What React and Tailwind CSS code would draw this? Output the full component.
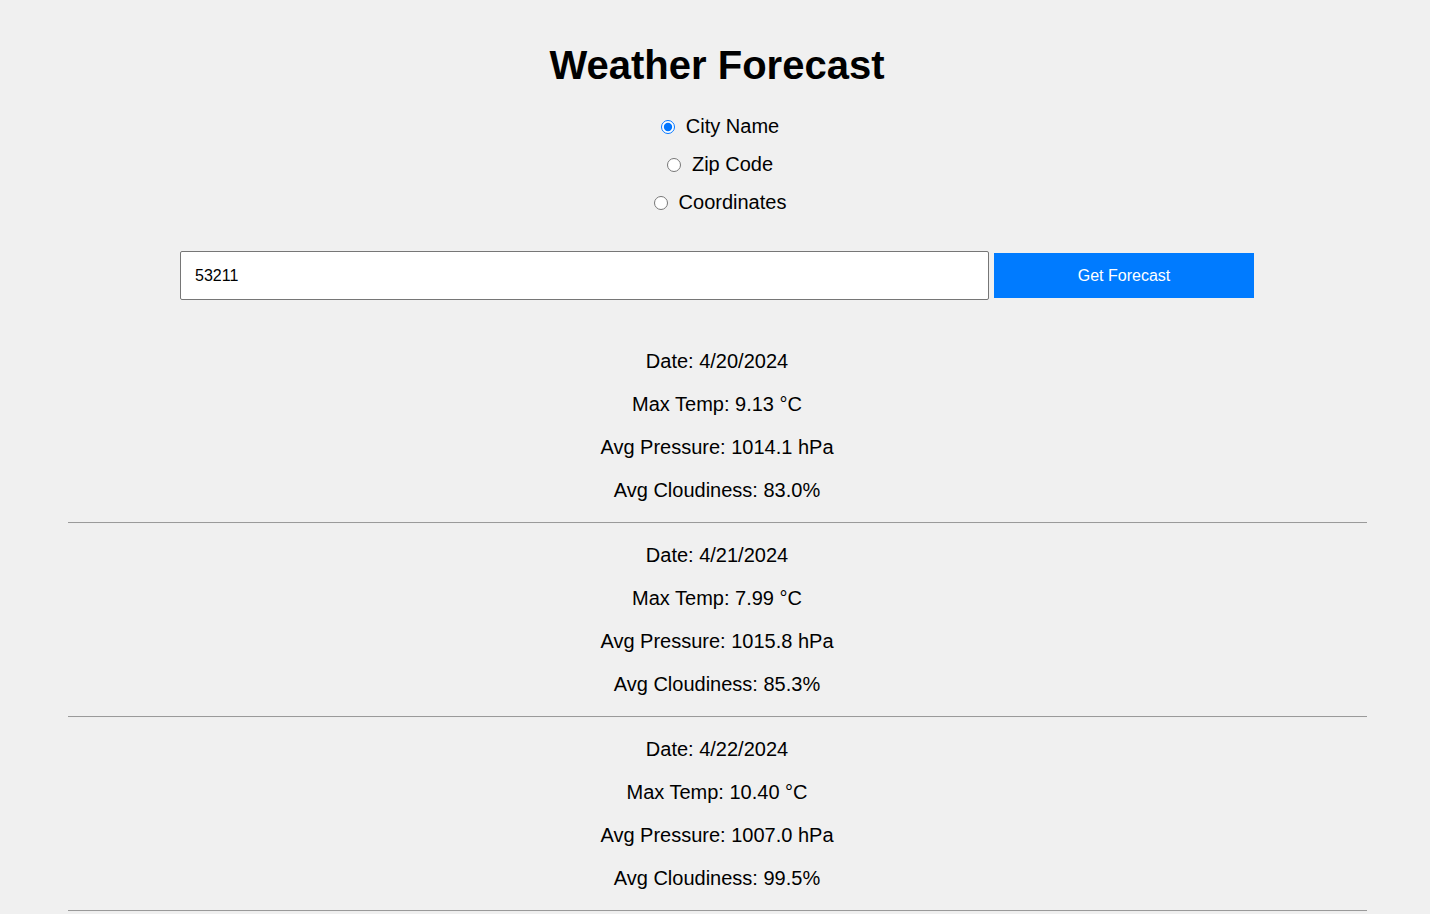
import React, { useState } from 'react'

const days = [
  { date: '4/20/2024', temp: '9.13', pressure: '1014.1', clouds: '83.0' },
  { date: '4/21/2024', temp: '7.99', pressure: '1015.8', clouds: '85.3' },
  { date: '4/22/2024', temp: '10.40', pressure: '1007.0', clouds: '99.5' },
]

export default function App() {
  const [mode, setMode] = useState('city')
  const [query, setQuery] = useState('53211')

  return (
    <div className="min-h-screen w-full bg-[#f0f0f0] pl-[4px] pt-[42px] text-black font-['Liberation_Sans',Arial,sans-serif]">
      <h1 className="text-center text-[40px] font-bold leading-[46px]">Weather Forecast</h1>

      {/* search type */}
      <div className="mt-[27px] flex flex-col items-center gap-[15px] pl-[6px] text-[20px] leading-[23px]">
        {[
          ['city', 'City Name'],
          ['zip', 'Zip Code'],
          ['coords', 'Coordinates'],
        ].map(([value, label]) => (
          <label key={value} className="flex items-center gap-[11px]">
            <input
              type="radio"
              name="mode"
              value={value}
              checked={mode === value}
              onChange={() => setMode(value)}
              className="h-[14px] w-[14px]"
            />
            <span>{label}</span>
          </label>
        ))}
      </div>

      {/* search bar */}
      <div className="mt-[37px] flex items-center justify-center">
        <input
          type="text"
          value={query}
          onChange={(e) => setQuery(e.target.value)}
          className="h-[49px] w-[809px] rounded-[2px] border border-[#767676] bg-white pl-[14px] text-[16px] text-black outline-none"
        />
        <button className="ml-[5px] h-[45px] w-[260px] bg-[#007bff] text-[16px] text-white">
          Get Forecast
        </button>
      </div>

      {/* results */}
      <div className="mt-[30px]">
        {days.map((d) => (
          <div key={d.date}>
            <div className="flex flex-col items-center gap-[20px] py-[20px] text-[20px] leading-[23px]">
              <p>Date: {d.date}</p>
              <p>Max Temp: {d.temp} °C</p>
              <p>Avg Pressure: {d.pressure} hPa</p>
              <p>Avg Cloudiness: {d.clouds}%</p>
            </div>
            <div className="mx-auto h-[2px] w-[1299px] border-t border-b border-t-[#9a9a9a] border-b-[#eeeeee]" />
          </div>
        ))}
      </div>
    </div>
  )
}
